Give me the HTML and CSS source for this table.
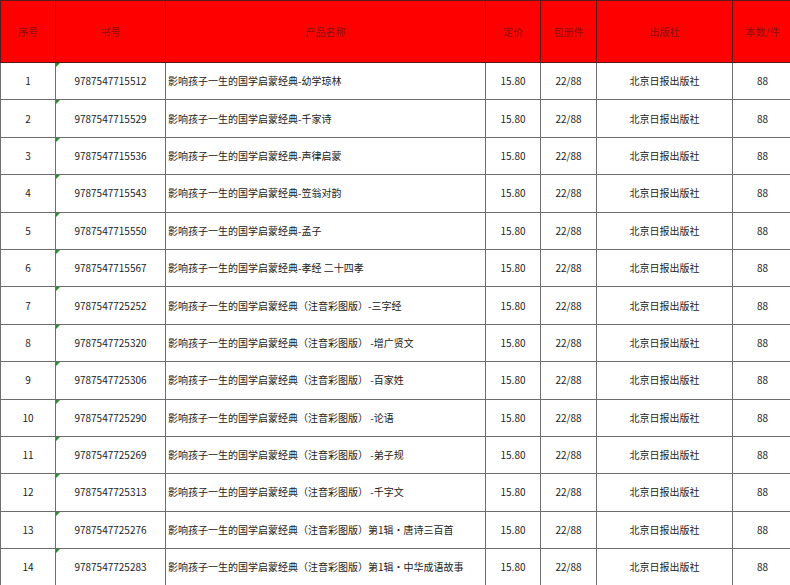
FILE: index.html
```html
<!DOCTYPE html>
<html lang="zh-CN">
<head>
<meta charset="utf-8">
<title>书目</title>
<link rel="stylesheet" href="styles.css">
</head>
<body>
<table class="sheet">
  <colgroup>
    <col class="c-no"><col class="c-isbn"><col class="c-name"><col class="c-price"><col class="c-pack"><col class="c-pub"><col class="c-qty">
  </colgroup>
  <thead>
    <tr class="head">
      <th>序号</th><th>书号</th><th>产品名称</th><th>定价</th><th>包册件</th><th>出版社</th><th>本数/件</th>
    </tr>
  </thead>
  <tbody>
    <tr><td>1</td><td class="isbn">9787547715512</td><td class="name">影响孩子一生的国学启蒙经典-幼学琼林</td><td>15.80</td><td>22/88</td><td>北京日报出版社</td><td>88</td></tr>
    <tr><td>2</td><td class="isbn">9787547715529</td><td class="name">影响孩子一生的国学启蒙经典-千家诗</td><td>15.80</td><td>22/88</td><td>北京日报出版社</td><td>88</td></tr>
    <tr><td>3</td><td class="isbn">9787547715536</td><td class="name">影响孩子一生的国学启蒙经典-声律启蒙</td><td>15.80</td><td>22/88</td><td>北京日报出版社</td><td>88</td></tr>
    <tr><td>4</td><td class="isbn">9787547715543</td><td class="name">影响孩子一生的国学启蒙经典-笠翁对韵</td><td>15.80</td><td>22/88</td><td>北京日报出版社</td><td>88</td></tr>
    <tr><td>5</td><td class="isbn">9787547715550</td><td class="name">影响孩子一生的国学启蒙经典-孟子</td><td>15.80</td><td>22/88</td><td>北京日报出版社</td><td>88</td></tr>
    <tr><td>6</td><td class="isbn">9787547715567</td><td class="name">影响孩子一生的国学启蒙经典-孝经 二十四孝</td><td>15.80</td><td>22/88</td><td>北京日报出版社</td><td>88</td></tr>
    <tr><td>7</td><td class="isbn">9787547725252</td><td class="name">影响孩子一生的国学启蒙经典（注音彩图版）-三字经</td><td>15.80</td><td>22/88</td><td>北京日报出版社</td><td>88</td></tr>
    <tr><td>8</td><td class="isbn">9787547725320</td><td class="name">影响孩子一生的国学启蒙经典（注音彩图版） -增广贤文</td><td>15.80</td><td>22/88</td><td>北京日报出版社</td><td>88</td></tr>
    <tr><td>9</td><td class="isbn">9787547725306</td><td class="name">影响孩子一生的国学启蒙经典（注音彩图版） -百家姓</td><td>15.80</td><td>22/88</td><td>北京日报出版社</td><td>88</td></tr>
    <tr><td>10</td><td class="isbn">9787547725290</td><td class="name">影响孩子一生的国学启蒙经典（注音彩图版） -论语</td><td>15.80</td><td>22/88</td><td>北京日报出版社</td><td>88</td></tr>
    <tr><td>11</td><td class="isbn">9787547725269</td><td class="name">影响孩子一生的国学启蒙经典（注音彩图版） -弟子规</td><td>15.80</td><td>22/88</td><td>北京日报出版社</td><td>88</td></tr>
    <tr><td>12</td><td class="isbn">9787547725313</td><td class="name">影响孩子一生的国学启蒙经典（注音彩图版） -千字文</td><td>15.80</td><td>22/88</td><td>北京日报出版社</td><td>88</td></tr>
    <tr><td>13</td><td class="isbn">9787547725276</td><td class="name">影响孩子一生的国学启蒙经典（注音彩图版）第1辑·唐诗三百首</td><td>15.80</td><td>22/88</td><td>北京日报出版社</td><td>88</td></tr>
    <tr><td>14</td><td class="isbn">9787547725283</td><td class="name">影响孩子一生的国学启蒙经典（注音彩图版）第1辑·中华成语故事</td><td>15.80</td><td>22/88</td><td>北京日报出版社</td><td>88</td></tr>
  </tbody>
</table>
</body>
</html>
```

FILE: styles.css
```css
html, body {
  margin: 0;
  padding: 0;
  background: #ffffff;
  overflow: hidden;
}

.sheet {
  border-collapse: collapse;
  table-layout: fixed;
  width: 792px;
  font-family: "Noto Sans CJK SC", "Liberation Sans", sans-serif;
  font-size: 10px;
  color: #222222;
}

.c-no { width: 55px; }
.c-isbn { width: 110px; }
.c-name { width: 320px; }
.c-price { width: 55px; }
.c-pack { width: 56px; }
.c-pub { width: 136px; }
.c-qty { width: 60px; }

.sheet th,
.sheet td {
  border: 1px solid #6e6e6e;
  padding: 0;
  text-align: center;
  vertical-align: middle;
  white-space: nowrap;
  overflow: hidden;
  line-height: 14px;
}

.head {
  height: 62px;
}

.sheet th {
  background: #ff0000;
  color: #8a1010;
  font-weight: normal;
  border-color: #5a1a1a;
}

.sheet tbody tr {
  height: 37.4px;
}

.sheet td.name {
  text-align: left;
  padding-left: 2px;
}

.sheet td.isbn {
  position: relative;
}

.sheet td.isbn::before {
  content: "";
  position: absolute;
  left: 0;
  top: 0;
  border-top: 4px solid #2f8a2f;
  border-right: 4px solid transparent;
}
```
